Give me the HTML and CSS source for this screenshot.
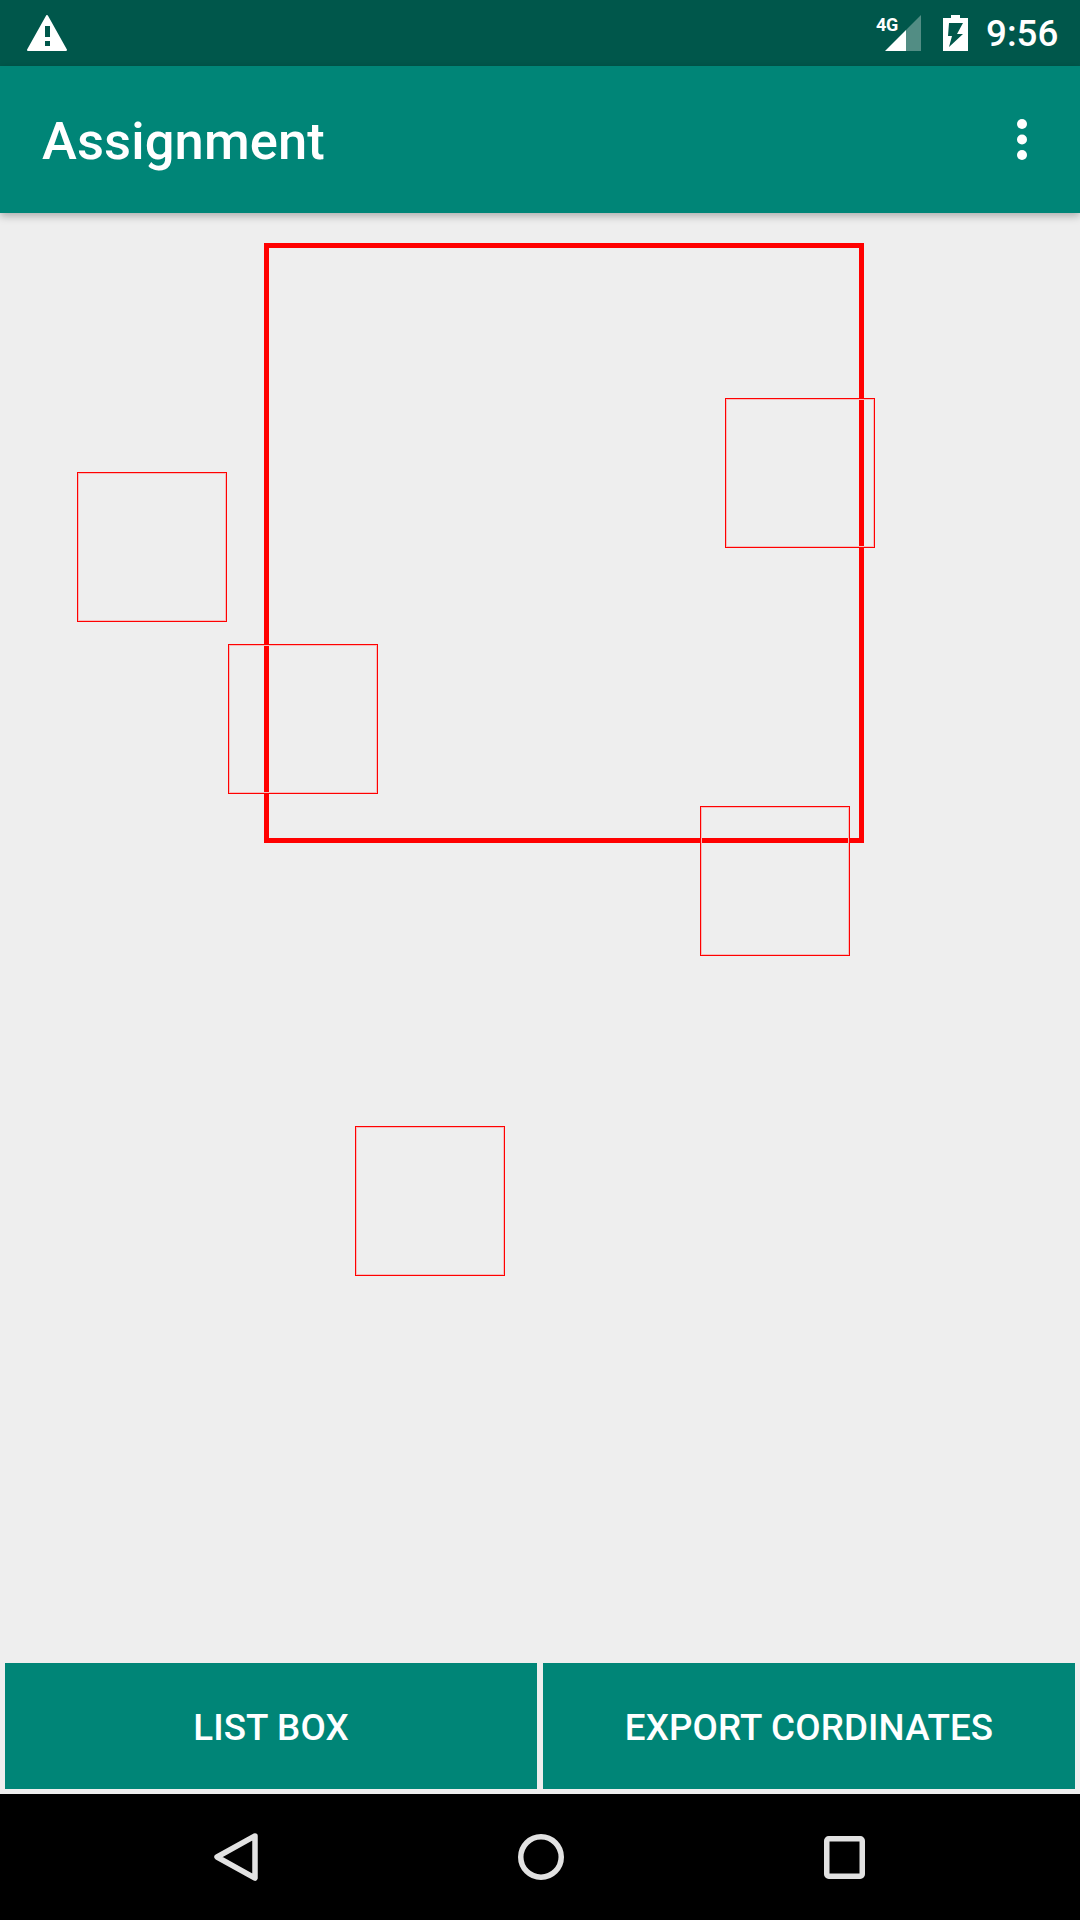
FILE: index.html
```html
<!DOCTYPE html>
<html lang="en">
<head>
<meta charset="utf-8">
<title>Assignment</title>
<link rel="stylesheet" href="styles.css">
</head>
<body>
<div class="phone">
  <header class="status-bar">
    <svg class="icon-warning" viewBox="0 0 40 36" aria-hidden="true">
      <path fill="#fff" fill-rule="evenodd" stroke="#fff" stroke-width="2" stroke-linejoin="round" d="M20 1 39 35H1Z"/>
      <path fill="#00574b" d="M18 11h5v11h-5zM18 26h5v5h-5z"/>
    </svg>
    <div class="status-right">
      <div class="signal">
        <span class="network">4G</span>
        <svg class="icon-signal" viewBox="0 0 36 36" aria-hidden="true">
          <path fill="#fff" d="M0 36 21 15V36Z"/>
          <path fill="#fff" fill-opacity=".32" d="M21 15 36 0V36H21Z"/>
        </svg>
      </div>
      <svg class="icon-battery" viewBox="0 0 25 36" aria-hidden="true">
        <path fill="#fff" d="M0 3H8V0H17V3H25V36H0Z"/>
        <path fill="#00574b" d="M6 8H20L14 19H20L6 32 9 21H5Z"/>
      </svg>
      <span class="clock">9:56</span>
    </div>
  </header>

  <div class="toolbar">
    <h1 class="title">Assignment</h1>
    <svg class="icon-more" viewBox="0 0 10 41" aria-hidden="true">
      <circle cx="5" cy="5" r="5" fill="#fff"/>
      <circle cx="5" cy="20.5" r="5" fill="#fff"/>
      <circle cx="5" cy="36" r="5" fill="#fff"/>
    </svg>
  </div>

  <main class="canvas">
    <div class="crop-box"></div>
    <div class="mark mark-a"></div>
    <div class="mark mark-b"></div>
    <div class="mark mark-c"></div>
    <div class="mark mark-d"></div>
    <div class="mark mark-e"></div>
  </main>

  <div class="actions">
    <button class="action" type="button">LIST BOX</button>
    <button class="action" type="button">EXPORT CORDINATES</button>
  </div>

  <nav class="nav-bar">
    <svg class="nav-back" viewBox="0 0 44 48" aria-hidden="true">
      <path fill="none" stroke="#e2e2e2" stroke-width="5.5" stroke-linejoin="round" d="M41 3 3 24 41 45Z"/>
    </svg>
    <svg class="nav-home" viewBox="0 0 46 46" aria-hidden="true">
      <circle cx="23" cy="23" r="20.25" fill="none" stroke="#e2e2e2" stroke-width="5.5"/>
    </svg>
    <svg class="nav-recent" viewBox="0 0 41 43" aria-hidden="true">
      <rect x="2.75" y="2.75" width="35.5" height="37.5" rx="2" fill="none" stroke="#e2e2e2" stroke-width="5.5"/>
    </svg>
  </nav>
</div>
</body>
</html>
```

FILE: styles.css
```css
* {
  box-sizing: border-box;
}

html,
body {
  margin: 0;
  padding: 0;
}

body {
  font-family: Roboto, "Noto Sans", sans-serif;
  background: #eeeeee;
}

.phone {
  display: flex;
  flex-direction: column;
  width: 1080px;
  height: 1920px;
  overflow: hidden;
  background: #eeeeee;
}

.status-bar {
  display: flex;
  flex: none;
  align-items: center;
  justify-content: space-between;
  height: 66px;
  padding: 0 21px 0 27px;
  background: #00574b;
  color: #ffffff;
}

.icon-warning {
  display: block;
  width: 40px;
  height: 36px;
}

.status-right {
  display: flex;
  align-items: center;
}

.signal {
  position: relative;
  width: 45px;
  height: 36px;
  margin-right: 22px;
}

.network {
  position: absolute;
  top: 3px;
  left: 0;
  font-size: 18px;
  font-weight: 700;
  line-height: 14px;
  letter-spacing: -0.4px;
}

.icon-signal {
  position: absolute;
  top: 0;
  right: 0;
  display: block;
  width: 36px;
  height: 36px;
}

.icon-battery {
  display: block;
  width: 25px;
  height: 36px;
  margin-right: 18px;
}

.clock {
  width: 73px;
  padding-top: 2px;
  font-size: 36.75px;
  font-weight: 500;
  line-height: 44px;
  white-space: nowrap;
}

.toolbar {
  position: relative;
  z-index: 2;
  display: flex;
  flex: none;
  align-items: center;
  justify-content: space-between;
  height: 147px;
  padding: 0 53px 0 42px;
  background: #008577;
  box-shadow: 0 3px 8px rgba(0, 0, 0, 0.28);
}

.title {
  margin: 0;
  padding-top: 2px;
  color: #ffffff;
  font-size: 52.5px;
  font-weight: 500;
  line-height: 62px;
  letter-spacing: 0.12px;
}

.icon-more {
  display: block;
  width: 10px;
  height: 41px;
}

.canvas {
  position: relative;
  flex: 1;
}

.crop-box {
  position: absolute;
  top: 30px;
  left: 264px;
  width: 600px;
  height: 600px;
  border: 5px solid #ff0000;
}

.mark {
  position: absolute;
  width: 150px;
  height: 150px;
  border: 1px solid #ff0000;
  box-shadow: inset 0 0 0 1px #f6bcbc;
}

.mark-a {
  top: 185px;
  left: 725px;
}

.mark-b {
  top: 259px;
  left: 77px;
}

.mark-c {
  top: 431px;
  left: 228px;
}

.mark-d {
  top: 593px;
  left: 700px;
}

.mark-e {
  top: 913px;
  left: 355px;
}

.actions {
  display: flex;
  flex: none;
  gap: 6px;
  padding: 0 5px 5px;
}

.action {
  flex: 1;
  height: 126px;
  padding: 2px 0 0;
  border: 0;
  border-radius: 0;
  background: #008577;
  color: #ffffff;
  font-family: inherit;
  font-size: 36.75px;
  font-weight: 500;
  letter-spacing: 0.14px;
}

.nav-bar {
  display: flex;
  flex: none;
  align-items: center;
  gap: 260px;
  height: 126px;
  padding-left: 214px;
  background: #000000;
}

.nav-back {
  display: block;
  width: 44px;
  height: 48px;
}

.nav-home {
  display: block;
  width: 46px;
  height: 46px;
}

.nav-recent {
  display: block;
  width: 41px;
  height: 43px;
}
```
